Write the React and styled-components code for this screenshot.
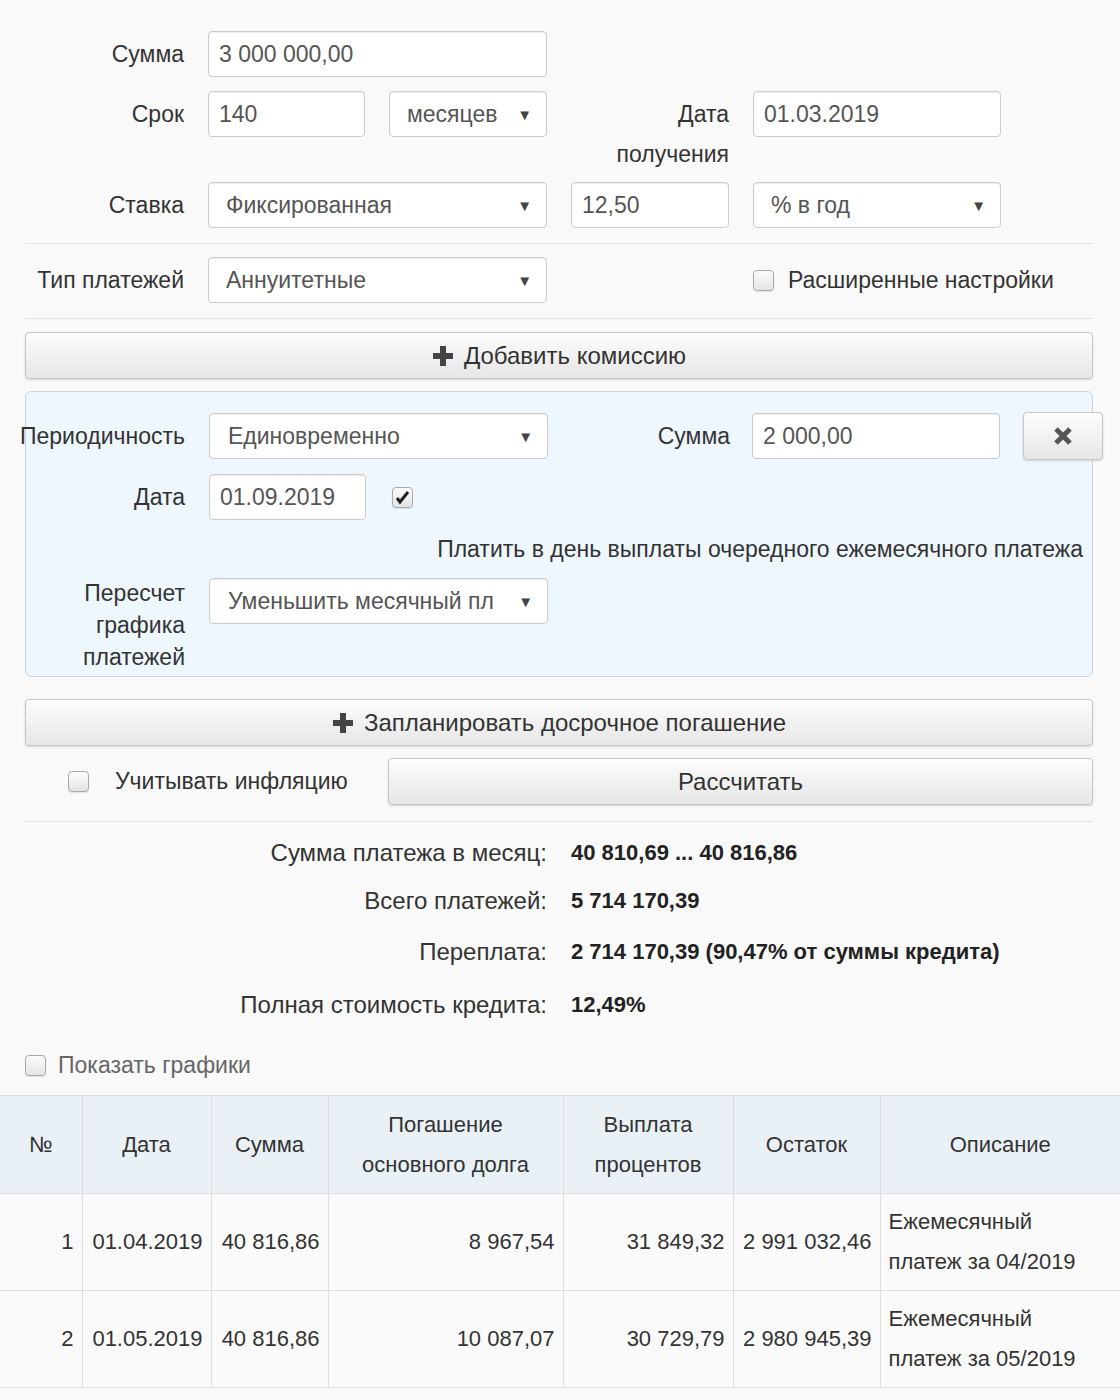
import React from "react";
import styled, { createGlobalStyle } from "styled-components";

const G = createGlobalStyle`
  body { margin:0; background:#f9f9f9; font-family:"Liberation Sans", Arial, sans-serif; color:#333; font-size:23px; }
  * { box-sizing:border-box; }
`;
const Page = styled.div` width:1120px; overflow:hidden; `;
const Form = styled.div` padding:31px 27px 0 25px; `;
const Grid = styled.div`
  display:grid; grid-template-columns:159px 157px 158px 158px 248px 1fr; column-gap:24px;
  row-gap:14px; align-items:start;
`;
const Label = styled.div`
  text-align:right; line-height:46px; white-space:nowrap; color:#333;
  ${p => p.$wrap && "white-space:normal; line-height:32px; margin-top:-8px;"}
`;
const Box = styled.div`
  height:46px; border:1px solid #ccc; border-radius:4px; background:#fff;
  display:flex; align-items:center; padding:0 10px; color:#555; font-size:23px;
  grid-column:${p => p.$col || "auto"};
  box-shadow: inset 0 1px 1px rgba(0,0,0,.075);
`;
const Sel = styled(Box)`
  justify-content:space-between; padding:0 14px 0 ${p => p.$pl || 17}px; color:#555;
  &::after { content:"▼"; font-size:15px; color:#444; }
`;
const Hr = styled.div` border-top:1px solid #e2e2e2; margin:${p => p.$m || "15px 0 13px"}; `;
const Check = styled.span`
  display:inline-block; width:21px; height:21px; border:1px solid #aaa; border-radius:4px;
  background:linear-gradient(#fdfdfd,#e3e3e3); position:relative; flex:none;
  box-shadow:0 1px 1px rgba(0,0,0,.1);
`;
const CheckRow = styled.div`
  display:flex; align-items:center; gap:${p => p.$gap || 14}px; height:46px; white-space:nowrap;
  grid-column:${p => p.$col || "auto"}; color:${p => p.$c || "#333"};
`;
const Btn = styled.div`
  height:47px; border:1px solid #c5c5c5; border-radius:4px;
  background:linear-gradient(#fdfdfd,#e6e6e6); box-shadow:0 1px 2px rgba(0,0,0,.15);
  display:flex; align-items:center; justify-content:center; gap:10px; color:#333; font-size:24px;
`;
const Blue = styled.div`
  background:#eef6fe; border:1px solid #c8d3dc; border-radius:6px; margin-top:12px;
  padding:21px 0 3px 0;
`;
const Hint = styled.div` grid-column:3 / 7; text-align:right; padding-right:20px; line-height:30px; `;
const Results = styled.div`
  display:grid; grid-template-columns:522px 1fr; column-gap:24px; margin-top:16px;
`;
const RL = styled.div` text-align:right; font-size:24px; height:${p => p.$h}px; line-height:30px; `;
const RV = styled.div` font-weight:bold; font-size:22px; height:${p => p.$h}px; line-height:30px; color:#222; `;
const Table = styled.table`
  width:1120px; border-collapse:collapse; margin-top:7px; font-size:22px;
  th { background:#e9f1f6; font-weight:normal; height:98px; line-height:40px; border:1px solid #ddd; padding:0 8px; color:#333; }
  td { height:97px; border:1px solid #ddd; padding:0 8px; text-align:right; color:#333; background:#fafafa; }
  td.d { text-align:left; line-height:40px; }
  tr > *:first-child { border-left:none; }
  tr > *:last-child { border-right:none; }
`;

const Plus = () => (
  <svg width="22" height="22" viewBox="0 0 22 22"><path d="M8 1h6v7h7v6h-7v7H8v-7H1V8h7z" fill="#444" /></svg>
);
const Tick = () => (
  <svg width="21" height="21" viewBox="0 0 21 21" style={{ position: "absolute", left: -1, top: -1 }}>
    <path d="M5 11l3 4 8-10" stroke="#222" strokeWidth="3" fill="none" />
  </svg>
);

export default function App() {
  return (
    <Page>
      <G />
      <Form>
        <Grid>
          <Label>Сумма</Label><Box $col="2 / 4">3 000 000,00</Box><div style={{ gridColumn: "4 / 7" }} />
          <Label>Срок</Label><Box>140</Box><Sel>месяцев</Sel>
          <Label $wrap style={{ marginTop: 0, lineHeight: "40px", marginBottom: -34, paddingTop: 3 }}>Дата получения</Label>
          <Box>01.03.2019</Box><div />
          <Label style={{ marginTop: 28 }}>Ставка</Label>
          <Sel $col="2 / 4" style={{ marginTop: 28 }}>Фиксированная</Sel>
          <Box style={{ marginTop: 28 }}>12,50</Box>
          <Sel style={{ marginTop: 28 }}>% в год</Sel>
        </Grid>
        <Hr />
        <Grid>
          <Label>Тип платежей</Label><Sel $col="2 / 4">Аннуитетные</Sel>
          <CheckRow $col="5 / 7"><Check />Расширенные настройки</CheckRow>
        </Grid>
        <Hr />
        <Btn><Plus />Добавить комиссию</Btn>
        <Blue>
          <Grid>
            <Label style={{ marginLeft: -12 }}>Периодичность</Label>
            <Sel $col="2 / 4" $pl={18}>Единовременно</Sel>
            <Label>Сумма</Label>
            <Box style={{ marginLeft: -2, marginRight: 2 }}>2 000,00</Box>
            <Btn style={{ width: 80, height: 48, marginLeft: -3, marginTop: -1 }}>
              <svg width="22" height="22" viewBox="0 0 22 22"><path d="M4 4l14 14M18 4L4 18" stroke="#555" strokeWidth="5" /></svg>
            </Btn>
            <Label>Дата</Label><Box>01.09.2019</Box>
            <CheckRow><Check style={{ marginLeft: 2 }}><Tick /></Check></CheckRow>
            <div style={{ gridColumn: "4 / 7" }} />
            <Hint>Платить в день выплаты очередного ежемесячного платежа</Hint>
            <Label $wrap style={{ marginTop: -1 }}>Пересчет графика платежей</Label>
            <Sel $col="2 / 4" $pl={18}>Уменьшить месячный пл</Sel>
          </Grid>
        </Blue>
        <Btn style={{ marginTop: 22 }}><Plus />Запланировать досрочное погашение</Btn>
        <Grid style={{ marginTop: 12, gridTemplateColumns: "340px 1fr", columnGap: 23 }}>
          <CheckRow $gap={26} style={{ paddingLeft: 43 }}><Check />Учитывать инфляцию</CheckRow>
          <Btn>Рассчитать</Btn>
        </Grid>
        <Hr $m="16px 0 0" />
        <Results>
          <RL $h={48}>Сумма платежа в месяц:</RL><RV $h={48}>40 810,69 ... 40 816,86</RV>
          <RL $h={51}>Всего платежей:</RL><RV $h={51}>5 714 170,39</RV>
          <RL $h={53}>Переплата:</RL><RV $h={53}>2 714 170,39 (90,47% от суммы кредита)</RV>
          <RL $h={40}>Полная стоимость кредита:</RL><RV $h={40}>12,49%</RV>
        </Results>
        <CheckRow $gap={12} $c="#666" style={{ marginTop: 12 }}><Check />Показать графики</CheckRow>
      </Form>
      <Table>
        <colgroup>
          <col width="82" /><col width="129" /><col width="117" /><col width="235" /><col width="170" /><col width="147" /><col />
        </colgroup>
        <thead>
          <tr><th>№</th><th>Дата</th><th>Сумма</th><th>Погашение<br />основного долга</th><th>Выплата<br />процентов</th><th>Остаток</th><th>Описание</th></tr>
        </thead>
        <tbody>
          <tr><td>1</td><td>01.04.2019</td><td>40 816,86</td><td>8 967,54</td><td>31 849,32</td><td>2 991 032,46</td><td className="d">Ежемесячный<br />платеж за 04/2019</td></tr>
          <tr><td>2</td><td>01.05.2019</td><td>40 816,86</td><td>10 087,07</td><td>30 729,79</td><td>2 980 945,39</td><td className="d">Ежемесячный<br />платеж за 05/2019</td></tr>
        </tbody>
      </Table>
    </Page>
  );
}
